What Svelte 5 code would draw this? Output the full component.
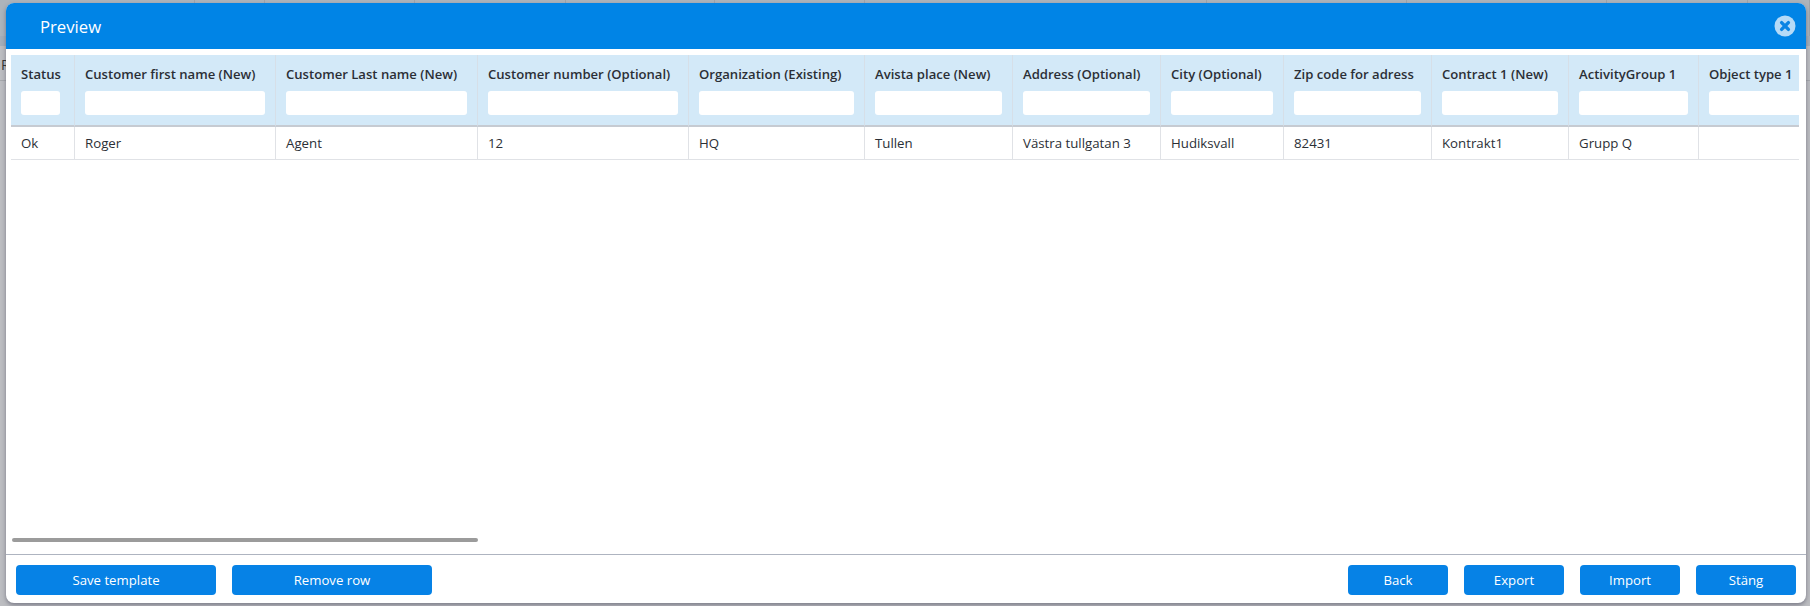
<script>
  const columns = [
    { label: 'Status', width: 64, value: 'Ok', narrow: true },
    { label: 'Customer first name (New)', width: 201, value: 'Roger' },
    { label: 'Customer Last name (New)', width: 202, value: 'Agent' },
    { label: 'Customer number (Optional)', width: 211, value: '12' },
    { label: 'Organization (Existing)', width: 176, value: 'HQ' },
    { label: 'Avista place (New)', width: 148, value: 'Tullen' },
    { label: 'Address (Optional)', width: 148, value: 'Västra tullgatan 3' },
    { label: 'City (Optional)', width: 123, value: 'Hudiksvall' },
    { label: 'Zip code for adress', width: 148, value: '82431' },
    { label: 'Contract 1 (New)', width: 137, value: 'Kontrakt1' },
    { label: 'ActivityGroup 1', width: 130, value: 'Grupp Q' },
    { label: 'Object type 1', width: 120, value: '' }
  ];
  const backdropCols = [195, 70, 150, 151, 149, 150, 342, 200, 200, 141, 62];
</script>

<div class="page">
  <div class="backdrop">
    <div class="back-head">
      {#each backdropCols as w}
        <span class="back-col" style="width:{w}px"></span>
      {/each}
    </div>
    <div class="back-band"></div>
    <div class="back-row">R</div>
  </div>
  <section class="modal">
    <header class="head">
      <h1>Preview</h1>
      <button class="close" aria-label="Close">
        <svg viewBox="0 0 22 22" width="22" height="22">
          <circle cx="11" cy="11" r="10.5" fill="#b5daf7" />
          <path d="M7.6 7.6 14.4 14.4M14.4 7.6 7.6 14.4" stroke="#0a84e4" stroke-width="3.4" stroke-linecap="round" />
        </svg>
      </button>
    </header>
    <div class="body">
      <div class="scroller">
        <table>
          <thead>
            <tr>
              {#each columns as c}
                <th style="width:{c.width}px">
                  <div class="label">{c.label}</div>
                  <input type="text" class:narrow={c.narrow} />
                </th>
              {/each}
            </tr>
          </thead>
          <tbody>
            <tr>
              {#each columns as c}
                <td>{c.value}</td>
              {/each}
            </tr>
          </tbody>
        </table>
      </div>
      <div class="scrollbar"></div>
    </div>
    <footer class="foot">
      <div class="group">
        <button class="btn wide">Save template</button>
        <button class="btn wide">Remove row</button>
      </div>
      <div class="group">
        <button class="btn">Back</button>
        <button class="btn">Export</button>
        <button class="btn">Import</button>
        <button class="btn">Stäng</button>
      </div>
    </footer>
  </section>
</div>

<style>
  :global(body) {
    margin: 0;
    background: #bcbdc1;
    font-family: "Open Sans", "Noto Sans", sans-serif;
  }
  .page {
    width: 1810px;
    height: 606px;
    padding: 3px 4px 3px 6px;
    box-sizing: border-box;
    position: relative;
    overflow: hidden;
    background: #bcbdc1;
  }
  .backdrop {
    position: absolute;
    inset: 0 0 auto 0;
    color: #333;
    font-size: 14px;
  }
  .back-head {
    height: 36px;
    display: flex;
    background: #adb4bb;
  }
  .back-col {
    flex: none;
    box-sizing: border-box;
    border-right: 1px solid #9ea4aa;
  }
  .back-band {
    height: 10px;
    background: #a5aeb9;
  }
  .back-row {
    height: 34px;
    padding-left: 1px;
    line-height: 38px;
    border-bottom: 1px solid #a6a8ac;
  }
  .modal {
    position: relative;
    height: 600px;
    background: #fff;
    border-radius: 8px;
    box-shadow: 0 2px 4px rgba(60, 60, 80, 0.5);
    display: flex;
    flex-direction: column;
    overflow: hidden;
  }
  .head {
    height: 46px;
    flex: none;
    background: #0084e6;
    display: flex;
    align-items: center;
    justify-content: space-between;
    padding: 0 10px 0 34px;
  }
  h1 {
    margin: 0;
    color: #fff;
    font-size: 16.7px;
    font-weight: 400;
  }
  .close {
    padding: 0;
    border: 0;
    background: none;
    display: flex;
  }
  .body {
    flex: 1;
    min-height: 0;
    padding: 6px 7px 0 5px;
    display: flex;
    flex-direction: column;
    border-bottom: 1px solid #aeb4c0;
  }
  .scroller {
    flex: 1;
    overflow: hidden;
  }
  table {
    border-collapse: separate;
    border-spacing: 0;
    table-layout: fixed;
    width: 1808px;
  }
  th {
    box-sizing: border-box;
    height: 72px;
    padding: 10px 0 10px 10px;
    background: #d3e9f8;
    border-right: 1px solid #d6dfe8;
    border-bottom: 2px solid #c6cbd2;
    text-align: left;
    vertical-align: top;
    font-size: 13.1px;
    font-weight: 600;
    color: #2b2f36;
    white-space: nowrap;
    overflow: hidden;
  }
  .label {
    height: 26px;
    line-height: 18px;
  }
  input {
    display: block;
    box-sizing: border-box;
    width: calc(100% - 10px);
    height: 24px;
    border: 0;
    border-radius: 3px;
    background: #fff;
    padding: 0;
  }
  input.narrow {
    width: 39px;
  }
  td {
    box-sizing: border-box;
    height: 33px;
    padding: 0 0 0 10px;
    border-right: 1px solid #e0e2e6;
    border-bottom: 1px solid #e0e2e6;
    font-size: 13.25px;
    color: #2b2f36;
    white-space: nowrap;
  }
  .scrollbar {
    flex: none;
    width: 466px;
    height: 4px;
    margin: 0 0 12px 1px;
    border-radius: 2px;
    background: #9b9b9b;
  }
  .foot {
    flex: none;
    height: 48px;
    box-sizing: border-box;
    padding: 10px 10px 0 10px;
    display: flex;
    justify-content: space-between;
  }
  .group {
    display: flex;
    gap: 16px;
  }
  .btn {
    width: 100px;
    height: 30px;
    border: 0;
    border-radius: 4px;
    background: #0682e6;
    color: #fff;
    font-family: inherit;
    font-size: 13.2px;
    padding: 0;
  }
  .btn.wide {
    width: 200px;
  }
</style>
